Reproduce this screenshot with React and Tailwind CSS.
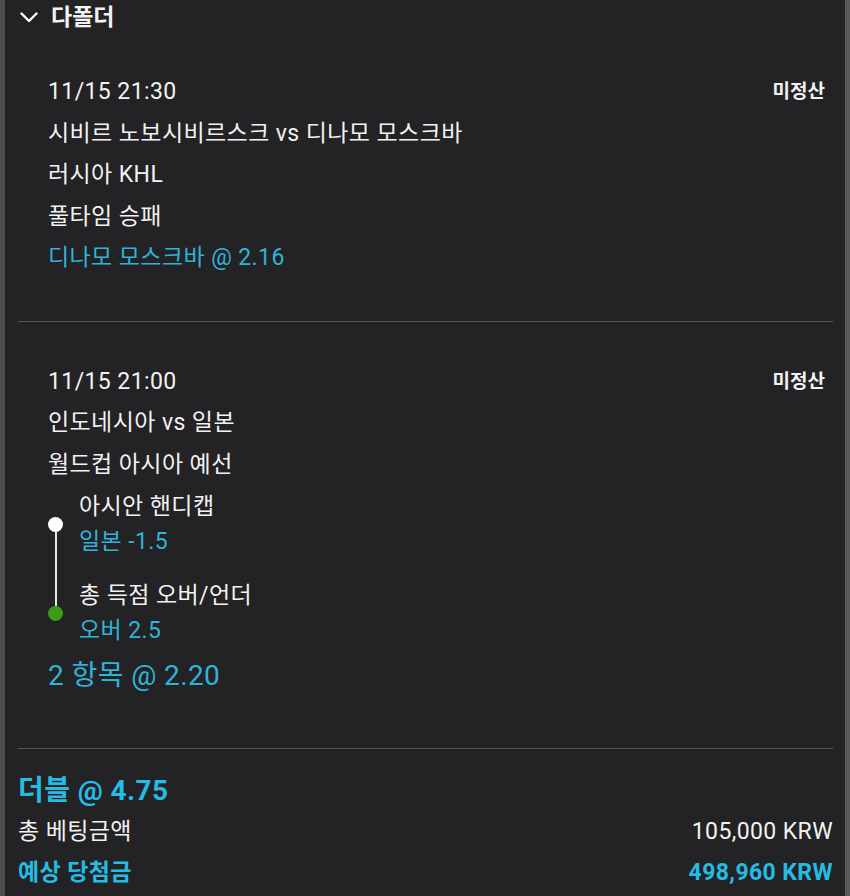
const legs = [
  { title: '아시안 핸디캡', pick: '일본 -1.5' },
  { title: '총 득점 오버/언더', pick: '오버 2.5' },
];

const App = () => {
  return (
    <div className="w-[850px] h-[896px] overflow-hidden bg-[#232225] text-[#f2f2f2] tracking-[0.4px] font-['Roboto','Noto_Sans_CJK_KR',sans-serif] border-l-[5px] border-r-[5px] border-l-[#4d4d4f] border-r-[#59595b]">
      {/* header */}
      <div className="h-[35px] flex items-center pl-[15px] gap-[13px]">
        <svg width="18" height="11" viewBox="0 0 18 11" fill="none">
          <path d="M1.5 1.5 L9 9 L16.5 1.5" stroke="#fff" strokeWidth="2.4" strokeLinecap="round" strokeLinejoin="round" />
        </svg>
        <span className="text-[23px] font-bold leading-none tracking-normal">다폴더</span>
      </div>

      <div className="pl-[13px] pr-[12px]">
        {/* single bet */}
        <div className="pt-[36px] pb-[42px] pl-[30px] pr-[8px] text-[23px] leading-[41.5px] border-b border-[#555458]">
          <div className="flex justify-between items-center">
            <span>11/15 21:30</span>
            <span className="text-[19px] font-bold tracking-normal">미정산</span>
          </div>
          <div>시비르 노보시비르스크 vs 디나모 모스크바</div>
          <div>러시아 KHL</div>
          <div>풀타임 승패</div>
          <div className="text-[#31b3d8]">디나모 모스크바 @ 2.16</div>
        </div>

        {/* combo bet */}
        <div className="pt-[39px] pb-[52px] pl-[30px] pr-[8px] text-[23px] border-b border-[#555458]">
          <div className="leading-[41.5px]">
            <div className="flex justify-between items-center">
              <span>11/15 21:00</span>
              <span className="text-[19px] font-bold tracking-normal">미정산</span>
            </div>
            <div>인도네시아 vs 일본</div>
            <div>월드컵 아시아 예선</div>
          </div>

          <div className="flex gap-[16px] mt-[4px]">
            <div className="w-[15px] flex flex-col items-center pt-[28px]">
              <div className="w-[15px] h-[15px] rounded-full bg-white" />
              <div className="w-[2px] h-[74px] bg-[#e6e6e6]" />
              <div className="w-[15px] h-[15px] rounded-full bg-[#3d9c16]" />
            </div>
            <div className="flex flex-col gap-[19px] leading-[35px]">
              {legs.map((leg) => (
                <div key={leg.title}>
                  <div>{leg.title}</div>
                  <div className="text-[#31b3d8]">{leg.pick}</div>
                </div>
              ))}
            </div>
          </div>

          <div className="mt-[7px] text-[28px] leading-[41px] text-[#31b3d8]">2 항목 @ 2.20</div>
        </div>

        {/* totals */}
        <div className="pt-[21px] leading-[41px]">
          <div className="text-[28px] font-bold text-[#25bbe3]">더블 @ 4.75</div>
          <div className="flex justify-between text-[23px]">
            <span>총 베팅금액</span>
            <span>105,000 KRW</span>
          </div>
          <div className="flex justify-between text-[23px] font-bold text-[#25bbe3]">
            <span>예상 당첨금</span>
            <span>498,960 KRW</span>
          </div>
        </div>
      </div>
    </div>
  );
};

export default App;
